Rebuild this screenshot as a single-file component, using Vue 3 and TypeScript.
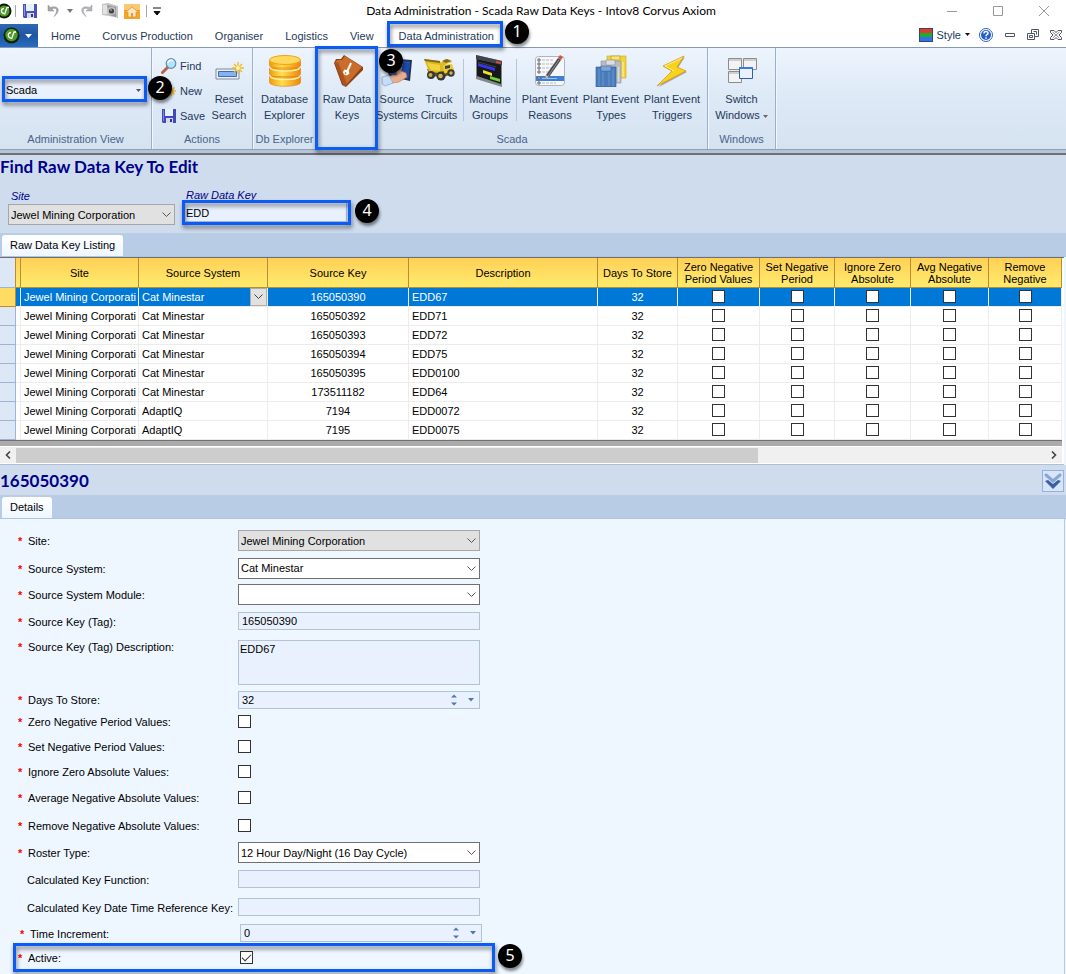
<script setup lang="ts">
import { ref } from 'vue'

interface RibbonItem { icon: string; lines: string[]; size: string; step?: number; sepBefore?: boolean }
interface KeyRow { system: string; key: string; description: string; days: number; flags: boolean[] }
interface Field {
  id: string
  label: string
  kind: 'select' | 'text' | 'area' | 'number' | 'check'
  value?: string
  required: boolean
  muted?: boolean
  shifted?: boolean
}

const tabs = ['Home', 'Corvus Production', 'Organiser', 'Logistics', 'View', 'Data Administration']
const scadaItems: RibbonItem[] = [
  { icon: 'keys', lines: ['Raw Data', 'Keys'], size: 'w58', step: 3 },
  { icon: 'source', lines: ['Source', 'Systems'], size: 'w40' },
  { icon: 'truck', lines: ['Truck', 'Circuits'], size: 'w42' },
  { icon: 'machine', lines: ['Machine', 'Groups'], size: 'w46', sepBefore: true },
  { icon: 'reasons', lines: ['Plant Event', 'Reasons'], size: 'w60', sepBefore: true },
  { icon: 'types', lines: ['Plant Event', 'Types'], size: 'w60' },
  { icon: 'triggers', lines: ['Plant Event', 'Triggers'], size: 'w60' },
]

const flagHeads = [
  ['Zero Negative', 'Period Values'],
  ['Set Negative', 'Period'],
  ['Ignore Zero', 'Absolute'],
  ['Avg Negative', 'Absolute'],
  ['Remove', 'Negative'],
]
const makeRow = (system: string, key: string, description: string): KeyRow => ({
  system, key, description, days: 32, flags: [false, false, false, false, false],
})
const rows = ref<KeyRow[]>([
  makeRow('Cat Minestar', '165050390', 'EDD67'),
  makeRow('Cat Minestar', '165050392', 'EDD71'),
  makeRow('Cat Minestar', '165050393', 'EDD72'),
  makeRow('Cat Minestar', '165050394', 'EDD75'),
  makeRow('Cat Minestar', '165050395', 'EDD0100'),
  makeRow('Cat Minestar', '173511182', 'EDD64'),
  makeRow('AdaptIQ', '7194', 'EDD0072'),
  makeRow('AdaptIQ', '7195', 'EDD0075'),
])
const selected = ref(0)
const search = ref('EDD')
const active = ref(true)

const fields: Field[] = [
  { id: 'site', label: 'Site:', kind: 'select', value: 'Jewel Mining Corporation', required: true, muted: true },
  { id: 'system', label: 'Source System:', kind: 'select', value: 'Cat Minestar', required: true },
  { id: 'module', label: 'Source System Module:', kind: 'select', value: '', required: true },
  { id: 'tag', label: 'Source Key (Tag):', kind: 'text', value: '165050390', required: true },
  { id: 'tagdesc', label: 'Source Key (Tag) Description:', kind: 'area', value: 'EDD67', required: true },
  { id: 'days', label: 'Days To Store:', kind: 'number', value: '32', required: true },
  { id: 'zero', label: 'Zero Negative Period Values:', kind: 'check', required: true },
  { id: 'set', label: 'Set Negative Period Values:', kind: 'check', required: true },
  { id: 'ignore', label: 'Ignore Zero Absolute Values:', kind: 'check', required: true },
  { id: 'average', label: 'Average Negative Absolute Values:', kind: 'check', required: true },
  { id: 'remove', label: 'Remove Negative Absolute Values:', kind: 'check', required: true },
  { id: 'roster', label: 'Roster Type:', kind: 'select', value: '12 Hour Day/Night (16 Day Cycle)', required: true },
  { id: 'calc', label: 'Calculated Key Function:', kind: 'text', value: '', required: false },
  { id: 'calcref', label: 'Calculated Key Date Time Reference Key:', kind: 'text', value: '', required: false },
  { id: 'increment', label: 'Time Increment:', kind: 'number', value: '0', required: true, shifted: true },
]
</script>

<template>
  <div class="app">
    <header class="titlebar">
      <div class="quick">
        <svg class="orb-half" width="12" height="16" viewBox="4 0 12 16"><circle cx="8" cy="8" r="7.5" fill="#0c1a08" /><circle cx="8" cy="8" r="5.5" fill="#4d9a27" /><path d="M8 5.5a2.500 2.500 0 1 0 0 5M8.500 11.500L11 4.500l2 0" stroke="#fff" stroke-width="1.300" fill="none" /></svg>
        <i class="vline"></i>
        <button class="qbtn save" aria-label="Save"><svg width="14" height="14" viewBox="0 0 14 14"><path d="M0 0h14v14H1l-1-1z" fill="#4a50c0" /><path d="M1 1h1v11H1z" fill="#8b90ea" /><path d="M3 0h8v7H3z" fill="#e6f1f8" /><path d="M4 9h7v5H4z" fill="#d5dae4" /><path d="M8 10h2v3H8z" fill="#30358f" /></svg></button>
        <button class="qbtn undo" aria-label="Undo"><svg width="14" height="14" viewBox="0 0 14 14"><path d="M1 1v6h6L4.800 5C9 2.500 12 6 7 12.500c7-5 5-12-3.700-9z" fill="#a3a5a9" stroke="#8b8d91" stroke-width=".5" /></svg></button>
        <svg class="qdrop" width="6" height="4" viewBox="0 0 6 4"><path d="M0 0h6L3 4z" fill="#777" /></svg>
        <button class="qbtn redo" aria-label="Redo"><svg width="14" height="14" viewBox="0 0 14 14"><path d="M13 1v6H7l2.200-2C5 2.500 2 6 7 12.500c-7-5-5-12 3.700-9z" fill="#b3b5b9" stroke="#999b9f" stroke-width=".5" /></svg></button>
        <button class="qbtn shot" aria-label="Capture"><svg width="16" height="16" viewBox="0 0 16 16"><path d="M0 1l6-1 10 3v12l-9-2-7-1z" fill="#c4c5c7" /><path d="M1 2h4v9H1z" fill="#e3e3e4" /><path d="M5 2l9 2v10l-7-2z" fill="#97999b" /><circle cx="9.500" cy="8" r="4" fill="#c2c3c4" /><circle cx="9.500" cy="8" r="2.600" fill="#444" /><circle cx="9" cy="7" r="1" fill="#999" /></svg></button>
        <button class="qbtn home" aria-label="Home"><svg width="16" height="15" viewBox="0 0 16 15"><path d="M0 0h16v15H0z" fill="#f5a52c" /><path d="M0 0h16v6H0z" fill="#fbc676" /><path d="M2 8l6-5 6 5-1 1-1-1v5H4V8L3 9z" fill="#fde6c3" stroke="#e38d24" stroke-width=".7" /><path d="M7 9h2v4H7z" fill="#e79c34" /></svg></button>
        <i class="vline"></i>
        <svg class="qmore" width="8" height="9" viewBox="0 0 8 9"><path d="M0 1h8M1 4.500h6L4 8z" stroke="#111" fill="#111" stroke-width="1" /></svg>
      </div>
      <h1 class="title">Data Administration - Scada Raw Data Keys - Intov8 Corvus Axiom</h1>
      <div class="winctl">
        <button aria-label="Minimize"><svg width="12" height="12" viewBox="0 0 12 12"><path d="M1 6.500h10" stroke="#999" /></svg></button>
        <button aria-label="Maximize"><svg width="12" height="12" viewBox="0 0 12 12"><path d="M1.500 1.500h9v9h-9z" stroke="#999" fill="none" /></svg></button>
        <button aria-label="Close"><svg width="12" height="12" viewBox="0 0 12 12"><path d="M1 1l10 10M11 1L1 11" stroke="#999" /></svg></button>
      </div>
    </header>

    <nav class="tabs">
      <button class="appbtn" aria-label="Application menu">
        <svg width="17" height="17" viewBox="0 0 17 17"><circle cx="8.500" cy="8.500" r="8" fill="#10240a" /><circle cx="8.500" cy="8" r="6.200" fill="#4d9a27" /><path d="M8 5.500a2.600 2.600 0 1 0 0 5.500M8.500 12L11 5h2" stroke="#fff" stroke-width="1.300" fill="none" /></svg>
        <svg width="7" height="4" viewBox="0 0 7 4"><path d="M0 0h7L3.500 4z" fill="#fff" /></svg>
      </button>
      <button v-for="t in tabs" :key="t" class="tab">
        {{ t }}
        <template v-if="t === 'Data Administration'"><span class="frame f-tab"></span><span class="badge b-tab">1</span></template>
      </button>
      <div class="tabtools">
        <button class="style-btn">
          <svg width="14" height="14" viewBox="0 0 14 14"><path d="M0 0h14v14H0z" fill="#34476f" /><path d="M1 1h12v4H1z" fill="#e23a2a" /><path d="M1 5h12v4H1z" fill="#1fae2b" /><path d="M1 9h12v4H1z" fill="#2f74ee" /></svg>
          Style
          <svg width="5" height="3" viewBox="0 0 5 3"><path d="M0 0h5L2.500 3z" fill="#111" /></svg>
        </button>
        <button aria-label="Help"><svg width="14" height="14" viewBox="0 0 14 14"><circle cx="7" cy="7" r="6.500" fill="#fff" stroke="#2c66bd" /><circle cx="7" cy="7" r="5" fill="#2560ca" /><path d="M5 5.500C5 3 9 3 9 5.300 9 6.500 7 6.600 7 8.200M7 9.300v1.500" stroke="#fff" stroke-width="1.500" fill="none" /></svg></button>
        <button aria-label="Minimize document"><svg width="12" height="12" viewBox="0 0 12 12"><path d="M1.500 4.500h9v3h-9z" stroke="#4f5661" fill="#fff" /></svg></button>
        <button aria-label="Restore document"><svg width="12" height="12" viewBox="0 0 12 12"><path d="M4.500 4V.5h7v7H8M.5 4.500h7v6h-7zM2.500 6.500h3v2h-3zM6.500 2.500h3v3" stroke="#4f5661" fill="none" /></svg></button>
        <button aria-label="Close document"><svg width="12" height="12" viewBox="0 0 12 12"><path d="M.5 1.500h3.500l2 2 2-2h3.500v2L9 6l2.500 2.500v2H8l-2-2-2 2H.5v-2L3 6 .5 3.500z" stroke="#4f5661" fill="#fff" /><path d="M2.500 3l7 6M9.500 3l-7 6" stroke="#8b919a" /></svg></button>
      </div>
    </nav>

    <section class="ribbon">
      <div class="group g-view">
        <div class="body view-body">
          <div class="combo admin">
            <select aria-label="Administration view"><option>Scada</option></select>
            <svg class="tri" width="5" height="3" viewBox="0 0 5 3"><path d="M0 0h5L2.500 3z" fill="#555" /></svg>
            <span class="frame f-view"></span><span class="badge b-view">2</span>
          </div>
        </div>
        <div class="caption">Administration View</div>
      </div>
      <div class="group g-actions">
        <div class="body actions-body">
          <div class="stack">
            <button><svg width="16" height="16" viewBox="0 0 16 16"><path d="M1.500 14.500L7 9" stroke="#b9653b" stroke-width="3" stroke-linecap="round" /><circle cx="10" cy="5.500" r="4.800" fill="#b6e3f8" stroke="#5b8cb8" stroke-width="1.200" /><path d="M7 5a3 3 0 0 1 5-2" stroke="#fff" stroke-width="1.500" fill="none" /></svg>Find</button>
            <button><svg width="16" height="16" viewBox="0 0 16 16"><path d="M10 3v10M5 8h10M6.500 4.500l7 7M13.500 4.500l-7 7" stroke="#efbd35" stroke-width="1.500" /></svg>New</button>
            <button><svg width="16" height="16" viewBox="0 0 16 16"><path d="M1 1h14v14H2l-1-1z" fill="#4349bc" /><path d="M2 2h1v11H2z" fill="#8186e6" /><path d="M4 1h8v7H4z" fill="#e6f1f8" /><path d="M5 10h7v5H5z" fill="#d5dae4" /><path d="M9 11h2v3H9z" fill="#30358f" /></svg>Save</button>
          </div>
          <button class="big w42">
            <svg width="32" height="32" viewBox="0 0 32 32"><path d="M3 14h23v10H3z" fill="#eef2f8" stroke="#818a99" /><path d="M5.500 16.500h18v5h-18z" fill="#87b2f0" stroke="#3e6cb9" /><path d="M25 7v12M19 13h12M21 9l8 8M29 9l-8 8" stroke="#f1b91f" stroke-width="1.300" /><circle cx="25" cy="13" r="2" fill="#fff5ae" /></svg>
            <span>Reset</span><span>Search</span>
          </button>
        </div>
        <div class="caption">Actions</div>
      </div>
      <div class="group g-db">
        <div class="body">
          <button class="big w58">
            <svg width="32" height="32" viewBox="0 0 32 32"><defs><linearGradient id="drum"><stop offset="0" stop-color="#f29a08" /><stop offset=".4" stop-color="#ffe052" /><stop offset="1" stop-color="#ee8508" /></linearGradient></defs><path d="M.5 21.500v6c1 5 30 5 31 0v-6zM.5 13v6c1 5 30 5 31 0v-6zM.5 5v5.500c1 5 30 5 31 0V5z" fill="url(#drum)" stroke="#e07d07" stroke-width=".6" /><path d="M1 13c4 4 26 4 30 0M1 21.500c4 4 26 4 30 0" stroke="#fff0b0" stroke-width="1.200" fill="none" /><ellipse cx="16" cy="5" rx="15.500" ry="4.500" fill="#ffd95c" stroke="#f2a01a" /></svg>
            <span>Database</span><span>Explorer</span>
          </button>
        </div>
        <div class="caption">Db Explorer</div>
      </div>
      <div class="group g-scada">
        <div class="body scada-body">
          <template v-for="item in scadaItems" :key="item.icon">
            <i v-if="item.sepBefore" class="rsep"></i>
            <button class="big" :class="item.size">
              <svg v-if="item.icon === 'keys'" width="32" height="32" viewBox="0 0 32 32"><path d="M3 8L5 4h5l3-4 19 12v3L15 32l-4-2z" fill="#8a4318" /><path d="M4 8l2-3h5l3-4 17 11-16 18z" fill="#cb6d2a" /><path d="M4 8l3-1 9 22-1 2-3-1z" fill="#a9531e" /><path d="M20 8l-4 9" stroke="#fff" stroke-width="2" /><path d="M13.500 14.500l4 1 1 3-2.500 2-3-1-1-2.500z" fill="#fff" /><circle cx="14.500" cy="18" r=".8" fill="#a9531e" /></svg>
              <svg v-else-if="item.icon === 'source'" width="32" height="32" viewBox="0 0 32 32"><path d="M3 3l28 2-2 21-21-5z" fill="#26314a" /><path d="M5 5l24 2-2 17-18-5z" fill="#2a63c4" /><path d="M20 7l9 1-2 16-5-2z" fill="#1c49ab" /><path d="M16 7l6 1-2 8-5-2z" fill="#a9cdf8" /><path d="M14 11l2-2 2 1 2 6 5 2 1 4-8 5-7 1-4-5 4-3 5 0z" fill="#e8ae8b" stroke="#b87456" stroke-width=".6" /><path d="M1 22l7-2 4 8-8 3-3-2z" fill="#c6ddf5" stroke="#86a8d4" stroke-width=".8" /></svg>
              <svg v-else-if="item.icon === 'truck'" width="32" height="32" viewBox="0 0 32 32"><path d="M4 14l16 2 10-3 1 5-10 4-14-1z" fill="#665219" /><path d="M1 4l16 2 1 2 4-4 6 1 1 2-6 2-1 6-5 3-11-1z" fill="#dcb821" /><path d="M1 4l16 2v2l-15-2zM19 6l5-2 4 2-5 2z" fill="#83681c" /><path d="M4 8l13 2v6l-9-1z" fill="#f3d33d" /><path d="M20 10l9-1 2 6-10 4z" fill="#f0ca2c" /><path d="M22 11l5-1v3l-5 1z" fill="#3c454a" /><circle cx="8" cy="20" r="4" fill="#343737" /><circle cx="7.500" cy="20" r="2" fill="#cdb03e" /><circle cx="18" cy="21" r="4.500" fill="#343737" /><circle cx="17.500" cy="21" r="2.300" fill="#d2b84f" /><circle cx="28" cy="18" r="3.700" fill="#393b39" /><circle cx="28" cy="18" r="1.700" fill="#d2b84f" /></svg>
              <svg v-else-if="item.icon === 'machine'" width="32" height="32" viewBox="0 0 32 32"><path d="M2 0l26 6v26L2 24z" fill="#85878b" /><path d="M3 4l24 5v20L3 21z" fill="#17181a" /><path d="M2 0l26 6v4L2 4z" fill="#424449" /><path d="M22 6l5 1v2l-5-1z" fill="#dc4a38" /><path d="M4 8l17 5v3L4 11z" fill="#3338e8" /><path d="M9 15l9 3v3l-9-3z" fill="#f0e02c" /><path d="M16 21l10 3v3l-10-3z" fill="#6bd433" /><path d="M4 7l18 5" stroke="#555" stroke-width=".7" /></svg>
              <svg v-else-if="item.icon === 'reasons'" width="32" height="32" viewBox="0 0 32 32"><rect x="1.500" y="1.500" width="29" height="29" rx="3" fill="#f6f7f9" stroke="#aeb4bd" /><path d="M2 21h28v5H2z" fill="#3e80d6" /><path d="M8 5h12M8 9h12M8 13h11M8 17h10M8 28h14" stroke="#b5b9bf" stroke-dasharray="3 1" /><path d="M8 23.500h15" stroke="#9cc2f4" /><g fill="#fff" stroke="#555"><circle cx="5" cy="5" r="1.200" /><circle cx="5" cy="9" r="1.200" /><circle cx="5" cy="13" r="1.200" /><circle cx="5" cy="17" r="1.200" /><circle cx="5" cy="23" r="1.200" /><circle cx="5" cy="28" r="1.200" /></g><path d="M24 3L12 20l-1 4 4-2L27 5z" fill="#4a4c50" /><path d="M25 5L14 21" stroke="#8d9096" /><path d="M24 3l2-3 3 2-2 3z" fill="#d6503e" /><path d="M12 20l3 2-4 2z" fill="#e0c09a" /></svg>
              <svg v-else-if="item.icon === 'types'" width="32" height="32" viewBox="0 0 32 32"><path d="M12 1h19v22H12z" fill="#f2d43a" stroke="#caa615" stroke-width=".6" /><path d="M16 1h9v4h-9z" fill="#f7e47a" stroke="#b9960f" stroke-width=".6" /><path d="M28 7v15" stroke="#f9ea92" stroke-width="1.500" /><path d="M6 6h20v22H6z" fill="#b9bcc0" stroke="#8f9297" stroke-width=".6" /><path d="M11 5h9v5h-9z" fill="#dcdee1" stroke="#8f9297" stroke-width=".6" /><path d="M23.500 12v15" stroke="#dadcdf" stroke-width="1.500" /><path d="M1 12h20v20H1z" fill="#4a7cbc" stroke="#2c5a99" stroke-width=".6" /><path d="M6 11h10v5H6z" fill="#7fa5d6" stroke="#3a68a6" stroke-width=".6" /><path d="M4 14v17M8 17v14M14 17v14M18 14v17" stroke="#6b95cb" /></svg>
              <svg v-else width="32" height="32" viewBox="0 0 32 32"><path d="M29 2L8 12l9 5L3 32l28-15-9-4z" fill="#5b5430" opacity=".45" /><path d="M28 1L7 11l9 5L1 31l29-15-9-4z" fill="#fbd21b" stroke="#d69b10" stroke-width=".8" /><path d="M26 3L9 11l9 5" stroke="#fff08a" fill="none" /></svg>
              <span v-for="l in item.lines" :key="l">{{ l }}</span>
              <template v-if="item.step"><span class="frame f-keys"></span><span class="badge b-keys">{{ item.step }}</span></template>
            </button>
          </template>
        </div>
        <div class="caption">Scada</div>
      </div>
      <div class="group g-windows">
        <div class="body">
          <button class="big w60">
            <svg width="32" height="32" viewBox="0 0 32 32"><g fill="#f3f3f3" stroke="#8c8c8c"><path d="M2.500 3.500h13v11h-13zM17.500 3.500h13v11h-13zM2.500 16.500h13v11h-13z" /></g><path d="M3 5h12M18 5h12M3 18h12" stroke="#aaa" /><path d="M13.500 12.500h13v11h-13z" fill="#eaf1fc" stroke="#2f5fb3" /><path d="M13 13h14" stroke="#3e7be0" stroke-width="2" /></svg>
            <span>Switch</span><span>Windows <svg width="5" height="3" viewBox="0 0 5 3"><path d="M0 0h5L2.500 3z" fill="#666" /></svg></span>
          </button>
        </div>
        <div class="caption">Windows</div>
      </div>
    </section>
    <div class="ribbon-edge"></div>

    <section class="find">
      <h2>Find Raw Data Key To Edit</h2>
      <div class="criteria">
        <div class="crit crit-site">
          <label for="find-site">Site</label>
          <div class="combo">
            <select id="find-site" class="muted"><option>Jewel Mining Corporation</option></select>
            <svg class="chev" width="9" height="6" viewBox="0 0 9 6"><path d="M.5.5l4 4 4-4" stroke="#555" fill="none" /></svg>
          </div>
        </div>
        <div class="crit crit-key">
          <label for="find-key">Raw Data Key</label>
          <div class="searchbox"><input id="find-key" v-model="search" type="text" /><span class="frame f-search"></span><span class="badge b-search">4</span></div>
        </div>
      </div>
    </section>

    <div class="strip"><button class="sheet">Raw Data Key Listing</button></div>

    <div class="grid">
      <table>
        <colgroup>
          <col class="c16" /><col class="c5" /><col class="c-site" /><col class="c-sys" /><col class="c-key" /><col class="c-desc" /><col class="c-days" /><col class="c-f1" /><col class="c-f2" /><col class="c-f3" /><col class="c-f4" /><col />
        </colgroup>
        <thead>
          <tr>
            <td class="corner"></td><th class="gap"></th>
            <th>Site</th><th>Source System</th><th>Source Key</th><th>Description</th><th>Days To Store</th>
            <th v-for="h in flagHeads" :key="h.join()">{{ h[0] }}<br />{{ h[1] }}</th>
          </tr>
        </thead>
        <tbody>
          <tr v-for="(r, i) in rows" :key="r.key" :class="{ on: i === selected }" @click="selected = i">
            <td class="mark"></td><td class="gap"></td>
            <td><div class="clip">Jewel Mining Corporation</div></td>
            <td><div class="syscell"><span>{{ r.system }}</span><button v-if="i === selected" aria-label="Choose source system"><svg width="9" height="6" viewBox="0 0 9 6"><path d="M.5.5l4 4 4-4" stroke="#444" fill="none" /></svg></button></div></td>
            <td class="mid">{{ r.key }}</td>
            <td>{{ r.description }}</td>
            <td class="mid">{{ r.days }}</td>
            <td v-for="(_, n) in r.flags" :key="n" class="mid"><input v-model="r.flags[n]" type="checkbox" :aria-label="flagHeads[n].join(' ') + ' ' + r.key" /></td>
          </tr>
        </tbody>
      </table>
      <div class="under"></div>
      <div class="scroll">
        <button aria-label="Scroll left"><svg width="6" height="8" viewBox="0 0 6 8"><path d="M5 .5L1.500 4 5 7.500" stroke="#444" stroke-width="1.600" fill="none" /></svg></button>
        <div class="track"><div class="thumb"></div></div>
        <button aria-label="Scroll right"><svg width="6" height="8" viewBox="0 0 6 8"><path d="M1 .5L4.500 4 1 7.500" stroke="#444" stroke-width="1.600" fill="none" /></svg></button>
      </div>
    </div>

    <section class="record">
      <h2>165050390</h2>
      <button class="collapse" aria-label="Collapse details"><svg width="18" height="18" viewBox="0 0 18 18"><path d="M2 3l7 6 7-6" stroke="#8aa5d2" stroke-width="3" fill="none" stroke-linecap="round" /><path d="M1 9l3-1 5 4 5-4 3 1-8 8z" fill="#3b5fa4" /></svg></button>
    </section>
    <div class="strip"><button class="sheet">Details</button></div>

    <form class="details" @submit.prevent>
      <div v-for="f in fields" :key="f.id" class="row" :class="['r-' + f.id, { shifted: f.shifted }]">
        <label :for="f.id" :class="{ plain: !f.required }"><span class="star">{{ f.required ? '*' : '' }}</span>{{ f.label }}</label>
        <div v-if="f.kind === 'select'" class="combo field">
          <select :id="f.id" :class="{ muted: f.muted }"><option>{{ f.value }}</option></select>
          <svg class="chev" width="9" height="6" viewBox="0 0 9 6"><path d="M.5.5l4 4 4-4" stroke="#555" fill="none" /></svg>
        </div>
        <input v-else-if="f.kind === 'text'" :id="f.id" class="field text" type="text" :value="f.value" />
        <textarea v-else-if="f.kind === 'area'" :id="f.id" class="field" :value="f.value"></textarea>
        <div v-else-if="f.kind === 'number'" class="field number">
          <input :id="f.id" type="text" inputmode="numeric" :value="f.value" />
          <button type="button" :aria-label="'Step ' + f.label"><svg width="6" height="12" viewBox="0 0 6 12"><path d="M0 3.500L3 .5l3 3zM0 8.500h6l-3 3z" fill="#4f77ad" /></svg></button>
          <button type="button" :aria-label="'Open ' + f.label"><svg width="6" height="4" viewBox="0 0 6 4"><path d="M0 0h6L3 3.500z" fill="#4f77ad" /></svg></button>
        </div>
        <input v-else :id="f.id" type="checkbox" />
      </div>
      <div class="row r-active">
        <label for="active"><span class="star">*</span>Active:</label>
        <input id="active" v-model="active" type="checkbox" />
        <span class="frame f-active"></span><span class="badge b-active">5</span>
      </div>
    </form>
  </div>
</template>

<style>
body { margin: 0; background: #eef6ff; }
</style>

<style scoped>
.app { display: flex; flex-direction: column; min-height: 100vh; overflow: hidden; font: 11px/16px "Liberation Sans", Arial, sans-serif; color: #000; background: #eef6ff; }
.app *, .app *::before, .app *::after { box-sizing: border-box; }
button, input, select, textarea { font: inherit; color: inherit; margin: 0; }
button { border: 0; padding: 0; background: none; }
h1, h2 { margin: 0; }
svg { display: block; flex: none; }

.titlebar { display: flex; align-items: center; height: 22px; background: #fff; }
.quick { display: flex; align-items: center; width: 162px; gap: 6px; }
.orb-half { margin-right: -3px; }
.vline { width: 1px; height: 12px; background: #a3a8b0; }
.quick .save { margin-left: 1px; }
.quick .undo { margin-left: 4px; }
.quick .shot { margin-left: 3px; }
.title { flex: 1; text-align: center; font: 12px/20px Lato, "Open Sans", sans-serif; white-space: nowrap; }
.winctl { display: flex; justify-content: flex-end; gap: 34px; width: 146px; padding-right: 16px; }

.tabs { display: flex; align-items: stretch; height: 25px; background: #fff; color: #1e395b; }
.appbtn { display: flex; align-items: center; gap: 5px; width: 38px; padding-left: 3px; margin-top: 2px; margin-right: 2px; background: linear-gradient(#2f68b2, #1e56a3 50%, #2a6cc0); }
.tab { position: relative; padding: 2px 11px 0; white-space: nowrap; }
.tab:nth-of-type(7) { margin-left: 3px; }
.tabtools { display: flex; align-items: center; gap: 11px; margin-left: auto; padding-right: 4px; }
.style-btn { display: flex; align-items: center; gap: 4px; margin-right: -2px; }

.ribbon { display: flex; border-top: 1px solid #8497b4; border-bottom: 1px solid #8ba0bf; background: linear-gradient(#edf4fd, #dde9f6 50%, #d5e2f0); color: #1e395b; }
.ribbon-edge { height: 5px; background: #b5c4d6; border-bottom: 2px solid #6f7073; }
.group { display: flex; flex-direction: column; flex: none; border-right: 1px solid #9aafcb; box-shadow: 1px 0 #f2f7fd; }
.g-view { width: 152px; }
.g-actions { width: 101px; }
.g-db { width: 64px; }
.g-scada { width: 391px; }
.g-windows { width: 68px; }
.body { display: flex; justify-content: center; height: 82px; padding-top: 7px; }
.caption { height: 19px; line-height: 18px; text-align: center; color: #4a638c; white-space: nowrap; }
.big { position: relative; display: flex; flex-direction: column; align-items: center; height: 75px; white-space: nowrap; }
.big > svg { margin-bottom: 4px; }
.big span svg { display: inline-block; vertical-align: middle; }
.w40 { width: 40px; } .w42 { width: 42px; } .w46 { width: 46px; } .w58 { width: 58px; } .w60 { width: 60px; }
.scada-body { justify-content: flex-start; gap: 1px; padding-left: 1px; }
.rsep { width: 1px; height: 62px; margin: 4px 2px 0; background: #b4c5dc; }
.actions-body { justify-content: space-between; padding-left: 9px; padding-right: 2px; }
.stack { display: flex; flex-direction: column; gap: 9px; padding-top: 3px; }
.stack button { display: flex; align-items: center; gap: 3px; }
.view-body { align-items: flex-start; padding: 31px 6px 0 4px; }

.combo { position: relative; }
select { appearance: none; display: block; width: 100%; height: 21px; padding: 0 18px 0 2px; border: 1px solid #707070; border-radius: 0; background: #fff; }
select.muted { background: #e1e1e1; border-color: #a6a6a6; }
.chev { position: absolute; right: 4px; top: 8px; pointer-events: none; }
.tri { position: absolute; right: 4px; top: 10px; pointer-events: none; }
.admin { width: 100%; color: #000; }
.admin select { height: 21px; border: 0; background: #eaf1fc; }

.frame { position: absolute; border: 3px solid #0a5cf5; filter: drop-shadow(1px 3px 2px rgba(0, 0, 0, .5)); pointer-events: none; z-index: 2; }
.badge { position: absolute; width: 24px; height: 24px; border-radius: 50%; background: #000; color: #fff; font: 16px/23px "Noto Sans", "Open Sans", sans-serif; text-align: center; box-shadow: 1px 3px 3px rgba(0, 0, 0, .45); pointer-events: none; z-index: 3; }
.f-tab { inset: -1px 2px 0 -1px; }
.b-tab { right: -24px; top: -2px; }
.f-view { inset: -3px -2px -2px; }
.b-view { right: -27px; top: -3px; }
.f-keys { inset: -9px -2px -20px -3px; }
.b-keys { right: -27px; top: -6px; }
.f-search { inset: -2px -4px -3px -4px; }
.b-search { right: -32px; top: -3px; }
.f-active { left: 13px; width: 482px; top: -2px; bottom: -3px; }
.b-active { left: 498px; top: -1px; }

.find { height: 78px; background: #cfdcee; }
h2 { font: bold 17px/24px Lato, "Open Sans", sans-serif; color: #00008b; }
.criteria { display: flex; gap: 11px; padding: 10px 8px 0; }
.crit { display: flex; flex-direction: column; }
.crit label { height: 15px; line-height: 15px; padding-left: 3px; font-style: italic; color: #00008b; }
.crit-site { width: 167px; }
.crit-key { width: 161px; }
.crit-key label { padding-left: 0; line-height: 13px; margin-bottom: -2px; }
.searchbox { position: relative; }
.searchbox input { display: block; width: 100%; height: 20px; padding: 1px 0 0; border: 1px solid #a9bcd4; border-left: 0; background: #e9f1fe; }

.strip { display: flex; align-items: flex-end; height: 24px; padding-left: 2px; background: #b9cce5; border-bottom: 1px solid #b0c4df; }
.sheet { height: 21px; padding: 0 8px 2px; border-radius: 3px 3px 0 0; background: linear-gradient(#fff, #eef6ff); }

.grid { margin-right: 2px; padding-right: 2px; border-top: 1px solid #6d6f73; border-bottom: 1px solid #aebfd8; background: #fff; }
table { width: 100%; table-layout: fixed; border-collapse: separate; border-spacing: 0; }
.c16 { width: 16px; } .c5 { width: 5px; } .c-site { width: 118px; } .c-sys { width: 129px; } .c-key { width: 141px; }
.c-desc { width: 189px; } .c-days { width: 80px; } .c-f1 { width: 82px; } .c-f2 { width: 75px; } .c-f3 { width: 76px; } .c-f4 { width: 78px; }
th { height: 30px; padding: 0; font-weight: normal; line-height: 12px; white-space: nowrap; border-right: 1px solid #bd8b32; border-bottom: 1px solid #bd8b32; background: linear-gradient(#ffd056, #ffeb6d); }
.corner { padding: 0; background: #dce8f5; border-right: 1px solid #bd8b32; border-bottom: 1px solid #9fb4d0; }
tbody td { height: 19px; padding: 0 0 0 3px; line-height: 16px; overflow: hidden; white-space: nowrap; border-right: 1px solid #ececec; border-bottom: 1px solid #ececec; }
tbody td.mark { background: #dce8f5; border-color: #9fb4d0; }
tbody td.mid { padding: 0; text-align: center; }
tbody td.gap { padding: 0; }
tr.on td { background: #0078d7; color: #fff; }
tr.on td.mark { background: #ffdc62; border-color: #bd8b32; }
.clip { overflow: hidden; margin-right: 2px; }
.syscell { display: flex; justify-content: space-between; align-items: center; height: 18px; }
.syscell button { display: grid; place-items: center; width: 17px; height: 18px; border: 1px solid #adadad; background: #e1e1e1; }
input[type="checkbox"] { appearance: none; display: block; width: 13px; height: 13px; border: 1px solid #333; background: #fff; border-radius: 0; }
td input[type="checkbox"] { margin: 0 auto 1px; }
input[type="checkbox"]:checked::after { content: ""; display: block; width: 9px; height: 5px; margin: 2px 0 0 1px; border-left: 1px solid #333; border-bottom: 1px solid #333; transform: rotate(-45deg); }
.under { height: 6px; background: #ababab; border-top: 1px solid #707070; }
.scroll { display: flex; align-items: center; height: 16px; margin: 1px 0; background: #f0f0f0; }
.scroll button { display: grid; place-items: center; width: 16px; height: 16px; }
.track { flex: 1; height: 15px; }
.thumb { width: 72%; height: 15px; background: #cdcdcd; }

.record { display: flex; align-items: center; justify-content: space-between; height: 30px; padding-right: 2px; padding-top: 2px; background: #cfdcee; }
.collapse { display: grid; place-items: center; width: 22px; height: 22px; border: 1px solid #92b1de; background: #d7e5f7; }

.details { flex: 1; padding: 8px 0 5px; margin-right: 1px; border-right: 1px solid #b4c8e1; }
.row { position: relative; display: flex; align-items: center; height: 25px; }
.row label { width: 238px; padding: 1px 0 0 18px; display: flex; white-space: nowrap; }
.row .star { width: 10px; color: #f00; font-weight: bold; }
.row .plain .star { width: 9px; }
.shifted { padding-left: 2px; }
.field { width: 242px; }
.r-site, .r-average { height: 27px; }
.r-system, .r-tag, .r-calc, .r-calcref { height: 28px; }
.r-tagdesc { height: 55px; }
.r-tagdesc label { align-self: flex-start; padding-top: 4px; }
.r-days { height: 19px; }
.r-remove { height: 29px; }
.r-increment, .r-active { height: 24px; }
.text, textarea, .number { border: 1px solid #b0c4d4; background: #eaf1fe; border-radius: 0; }
.text { height: 18px; padding: 0 3px; }
textarea { height: 45px; padding: 0 1px; line-height: 16px; resize: none; display: block; }
.number { display: flex; height: 18px; align-items: center; }
.number input { flex: 1; min-width: 0; height: 16px; padding: 0 3px; border: 0; background: none; }
.number button { display: grid; place-items: center; width: 17px; height: 16px; }
.r-active label { width: 240px; }
</style>
